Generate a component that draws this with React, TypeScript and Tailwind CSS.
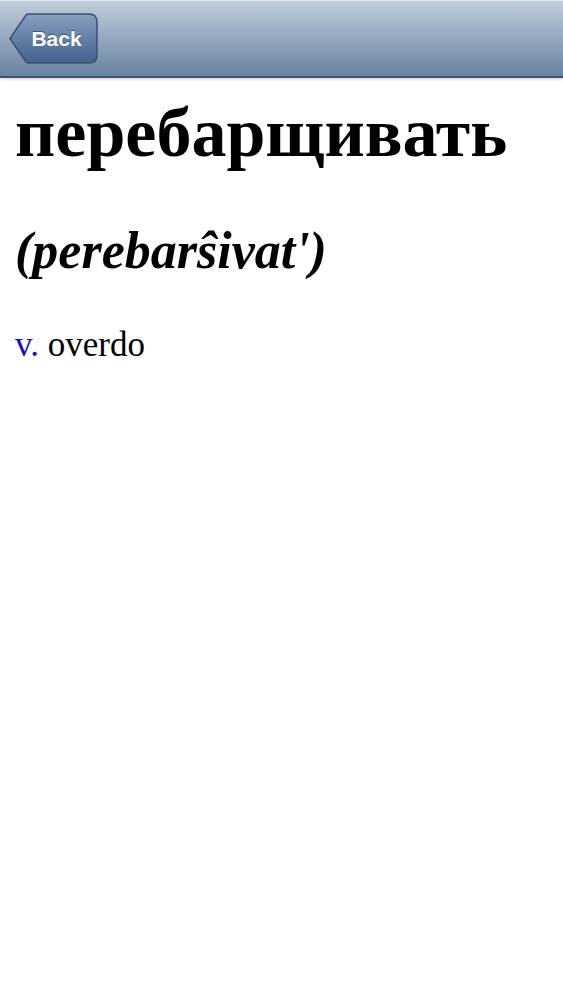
export default function App() {
  return (
    <div className="min-h-screen w-full bg-white">
      <header className="relative h-[78px] w-full border-b-2 border-[#3f5472] bg-gradient-to-b from-[#c3d0de] via-[#94a7be] to-[#6a82a2] shadow-[0_2px_2px_rgba(0,0,0,0.12)]">
        <div className="absolute inset-x-0 top-0 h-px bg-[#dfe7f0]" />
        <div className="flex h-full items-center pl-[9px] pt-px">
          <button className="relative flex h-[51px] w-[89px] items-center justify-center">
            <svg className="absolute inset-0" width="89" height="51" viewBox="0 0 89 51">
              <defs>
                <linearGradient id="bb" x1="0" y1="0" x2="0" y2="1">
                  <stop offset="0" stopColor="#889fbf" />
                  <stop offset="0.5" stopColor="#6480a7" />
                  <stop offset="1" stopColor="#45618d" />
                </linearGradient>
              </defs>
              <path
                d="M1 25.5 L17 2 Q18 1 20 1 L80 1 Q88 1 88 9 L88 42 Q88 50 80 50 L20 50 Q18 50 17 49 Z"
                fill="url(#bb)"
                stroke="#3a5073"
                strokeWidth="1.5"
              />
            </svg>
            <span className="relative ml-[6px] font-['Liberation_Sans',Arial,sans-serif] text-[21px] font-bold text-white [text-shadow:0_-1px_0_rgba(0,0,0,0.4)]">
              Back
            </span>
          </button>
        </div>
      </header>
      <main className="px-[15px] font-['Liberation_Serif','Times_New_Roman',serif] text-black">
        <h1 className="mt-[15px] text-[70px] font-bold leading-[80px]">перебарщивать</h1>
        <h2 className="mt-[48px] text-[52px] font-bold italic leading-[60px]">(perebarŝivat')</h2>
        <p className="mt-[44px] text-[35px] leading-[40px]">
          <span className="text-[#1a12b0]">v.</span> overdo
        </p>
      </main>
    </div>
  );
}
